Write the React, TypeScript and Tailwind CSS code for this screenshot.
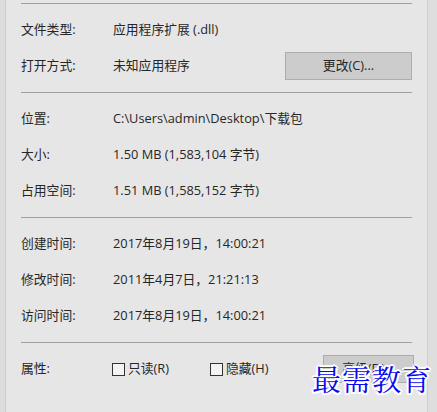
import React from "react";

const font = { fontFamily: '"Open Sans","Noto Sans CJK SC",sans-serif' };

function Row({ label, children }: { label: string; children?: React.ReactNode }) {
  return (
    <div className="flex h-[36px] items-center">
      <div className="w-[92px] shrink-0">{label}</div>
      <div className="flex flex-1 items-center">{children}</div>
    </div>
  );
}

function Sep() {
  return <div className="h-px bg-[#a0a0a0] mr-[15px]" />;
}

function Box() {
  return <span className="inline-block w-[13px] h-[13px] border border-[#333] bg-[#f4f4f4] mr-[3px]" />;
}

export default function App() {
  return (
    <div
      className="relative flex w-[437px] h-[412px] bg-[#e6e6e6] text-[12.8px] text-[#262626] overflow-hidden"
      style={font}
    >
      <div className="w-[6px] shrink-0 bg-[#dcdcdc] border-r border-[#cdcdcd]" />
      <div className="flex-1 flex flex-col pl-[15px] pt-[3px]">
        <Sep />
        <div className="py-[8px]">
          <Row label="文件类型:">应用程序扩展 (.dll)</Row>
          <Row label="打开方式:">
            <span>未知应用程序</span>
            <div className="ml-auto mr-[15px] w-[127px] h-[28px] bg-[#cccccc] border border-[#adadad] flex items-center justify-center">
              更改(C)...
            </div>
          </Row>
        </div>
        <Sep />
        <div className="py-[8px]">
          <Row label="位置:">C:\Users\admin\Desktop\下载包</Row>
          <Row label="大小:">1.50 MB (1,583,104 字节)</Row>
          <Row label="占用空间:">1.51 MB (1,585,152 字节)</Row>
        </div>
        <Sep />
        <div className="py-[8px]">
          <Row label="创建时间:">2017年8月19日，14:00:21</Row>
          <Row label="修改时间:">2011年4月7日，21:21:13</Row>
          <Row label="访问时间:">2017年8月19日，14:00:21</Row>
        </div>
        <Sep />
        <div className="pt-[8px]">
          <div className="flex h-[36px] items-center">
            <div className="w-[91px] shrink-0">属性:</div>
            <div className="flex items-center w-[98px]">
              <Box />
              只读(R)
            </div>
            <div className="flex items-center">
              <Box />
              隐藏(H)
            </div>
            <div className="ml-auto mr-[13px] w-[91px] h-[28px] bg-[#cccccc] border border-[#adadad] flex items-center justify-center">
              高级(D)...
            </div>
          </div>
        </div>
      </div>
      <div className="w-[10px] shrink-0 bg-[#dedede] border-l border-[#cfcfcf]" />
      <div
        className="absolute left-[312px] top-[364px] text-[29px] leading-none text-[#0a0af0] tracking-[1px] [text-shadow:2px_0_0_#fff,-2px_0_0_#fff,0_2px_0_#fff,0_-2px_0_#fff,1.5px_1.5px_0_#fff,-1.5px_-1.5px_0_#fff,1.5px_-1.5px_0_#fff,-1.5px_1.5px_0_#fff]"
        style={{ fontFamily: '"Noto Serif CJK SC","Noto Sans CJK SC",serif' }}
      >
        最需教育
      </div>
    </div>
  );
}
